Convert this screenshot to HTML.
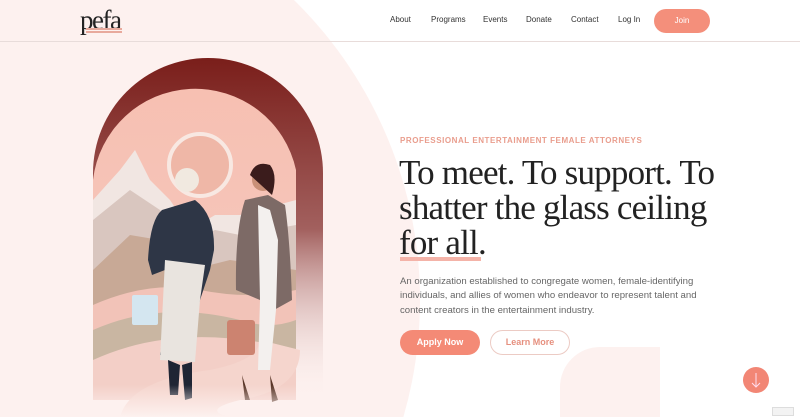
<!DOCTYPE html>
<html style="width:800px;height:417px;overflow:hidden"><head><meta charset="utf-8"><style>
*{margin:0;padding:0;box-sizing:border-box}
body{width:800px;height:417px;overflow:hidden;background:#fff;font-family:"Liberation Sans",sans-serif;position:relative}
.abs{position:absolute}
nav a{position:absolute;top:15px;font-size:8px;color:#333;text-decoration:none}
</style></head><body>
<svg class="abs" style="left:0;top:0" width="800" height="417">
<circle cx="0" cy="300" r="420" fill="#fdf1ef"/>
<path d="M560 417V387A40 40 0 0 1 600 347H660V417Z" fill="#fdf1ef"/>
</svg>
<div class="abs" style="left:0;top:0;width:800px;height:42px;border-bottom:1px solid #e8dcda"></div>
<div class="abs" style="left:80px;top:5px;font-family:'Liberation Serif',serif;font-size:27px;color:#222;letter-spacing:-1.5px">pefa</div>
<div class="abs" style="left:86px;top:28px;width:36px;height:2px;background:#e8a99c"></div>
<div class="abs" style="left:86px;top:31px;width:36px;height:2px;background:#e8a99c"></div>
<nav><a style="left:390px">About</a><a style="left:431px">Programs</a><a style="left:483px">Events</a><a style="left:526px">Donate</a><a style="left:571px">Contact</a><a style="left:618px">Log In</a></nav>
<div class="abs" style="left:654px;top:9px;width:56px;height:24px;border-radius:12px;background:#f48f7b;color:#fff;font-size:8px;text-align:center;line-height:24px">Join</div>

<svg class="abs" style="left:0;top:0" width="400" height="417">
<defs>
<linearGradient id="d" x1="0" y1="0" x2="0" y2="1"><stop offset="0" stop-color="#7a1e1a"/><stop offset=".5" stop-color="#a2605e"/><stop offset="1" stop-color="#fdf1ef" stop-opacity="0"/></linearGradient>
<linearGradient id="p" x1="0" y1="0" x2="0" y2="1"><stop offset="0" stop-color="#f7c0b2"/><stop offset="1" stop-color="#f3c9c0"/></linearGradient>
<linearGradient id="f" x1="0" y1="0" x2="0" y2="1"><stop offset="0" stop-color="#fdf1ef" stop-opacity="0"/><stop offset="1" stop-color="#fdf1ef"/></linearGradient>
<clipPath id="c"><path d="M93 400V170A103 103 0 0 1 296 170V400Z"/></clipPath>
</defs>
<path d="M93 400V173A115 115 0 0 1 323 173V400Z" fill="url(#d)"/>
<path d="M93 400V180A103 103 0 0 1 296 170V400Z" fill="url(#p)"/>
<g clip-path="url(#c)">
<circle cx="200" cy="165" r="31" fill="#efb7a7" stroke="#f8e8e2" stroke-width="4"/>
<path d="M93 200L120 170L135 150L150 180L170 200L190 230L215 215L240 215L296 200V400H93Z" fill="#f1e6e2"/>
<path d="M93 220L130 190L160 210L185 245L215 230L240 235L296 225V400H93Z" fill="#d9c6bf"/>
<path d="M93 270L130 235L160 240L190 270L230 260L296 270V400H93Z" fill="#c8a996"/>
<path d="M93 305Q150 280 200 290Q250 300 296 290V400H93Z" fill="#f2c3b8"/>
<path d="M93 330Q160 300 240 320Q270 330 296 320V400H93Z" fill="#c9b6a2"/>
<path d="M93 360Q180 320 296 350V400H93Z" fill="#f3cfc7"/>
</g>
<path d="M120 417Q130 380 210 370Q260 360 260 340L300 350Q300 390 240 400Q200 410 230 417Z" fill="#f5d5cd"/>
<path d="M162 210Q150 220 148 260L152 275L165 270L168 300L160 355L185 360L200 300L210 270L214 250Q215 215 195 200Z" fill="#2e3646"/>
<path d="M165 260L160 360L195 362L200 300L205 265Z" fill="#e9e4df"/>
<path d="M168 360L170 395L178 395L180 365ZM182 365L185 400L192 398L192 362Z" fill="#1f2534"/>
<circle cx="187" cy="180" r="12" fill="#f1e9e0"/>
<rect x="132" y="295" width="26" height="30" rx="2" fill="#d4e6f0"/>
<path d="M245 200Q235 230 236 290L260 300L265 315L292 300Q290 240 285 205L268 195Z" fill="#7d6a66"/>
<path d="M258 205L270 210L278 240L276 310L270 370L258 370L260 300Z" fill="#f3f0ee"/>
<circle cx="263" cy="180" r="11" fill="#c99078"/>
<path d="M250 175Q255 160 270 165Q278 175 272 195Z" fill="#3b1c1c"/>
<rect x="227" y="320" width="28" height="35" rx="3" fill="#cc8370"/>
<path d="M242 375L245 400L250 400ZM270 375L272 402L278 400Z" fill="#5a3628"/>
<rect x="80" y="385" width="300" height="32" fill="url(#f)"/>
</svg>

<div class="abs" style="left:400px;top:136px;font-size:8px;font-weight:bold;color:#e99d8d;letter-spacing:.55px">PROFESSIONAL ENTERTAINMENT FEMALE ATTORNEYS</div>
<div class="abs" style="left:399px;top:155px;font-family:'Liberation Serif',serif;font-size:35px;line-height:35px;color:#222;letter-spacing:-0.8px;width:340px">To meet. To support. To shatter the glass ceiling for all.</div>
<div class="abs" style="left:400px;top:257px;width:81px;height:4px;background:#f4b3a8"></div>
<div class="abs" style="left:400px;top:275px;font-size:9.6px;line-height:14.4px;color:#666;width:330px">An organization established to congregate women, female-identifying individuals, and allies of women who endeavor to represent talent and content creators in the entertainment industry.</div>
<div class="abs" style="left:400px;top:330px;width:80px;height:25px;border-radius:13px;background:#f48a76;color:#fff;font-size:9px;font-weight:bold;text-align:center;line-height:25px">Apply Now</div>
<div class="abs" style="left:490px;top:330px;width:80px;height:25px;border-radius:13px;border:1px solid #eccbc4;background:#fff;color:#e6907f;font-size:9px;font-weight:bold;text-align:center;line-height:23px">Learn More</div>
<div class="abs" style="left:743px;top:367px;width:26px;height:26px;border-radius:50%;background:#f28675"></div>
<svg class="abs" style="left:743px;top:367px" width="26" height="26"><path d="M13 6V20M9 16L13 20L17 16" stroke="#fde" stroke-width="1" fill="none"/></svg>
<div class="abs" style="left:772px;top:407px;width:22px;height:9px;background:#f3f3f3;border:1px solid #ddd"></div>
</body></html>
